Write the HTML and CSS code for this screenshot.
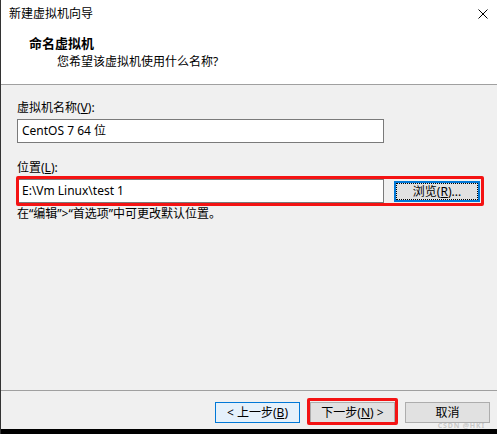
FILE: index.html
```html
<!DOCTYPE html>
<html lang="zh-CN">
<head>
  <meta charset="UTF-8">
  <title>新建虚拟机向导</title>
  <link rel="stylesheet" href="styles.css">
</head>
<body>

  <div class="window">
    <!-- Title bar -->
    <div class="titlebar">
      <span class="title">新建虚拟机向导</span>
      <svg class="close" width="10" height="10" viewBox="0 0 10 10">
        <path d="M 0.5 0.5 L 9.5 9.5 M 9.5 0.5 L 0.5 9.5" />
      </svg>
    </div>

    <!-- Wizard header -->
    <div class="header">
      <div class="header-title">命名虚拟机</div>
      <div class="header-sub">您希望该虚拟机使用什么名称?</div>
    </div>

    <!-- Form -->
    <div class="content">
      <div class="label">虚拟机名称(<u>V</u>):</div>
      <div class="field">CentOS 7 64 位</div>

      <div class="label label-second">位置(<u>L</u>):</div>
      <div class="row">
        <div class="field">E:\Vm Linux\test 1</div>
        <div class="btn btn-focus">浏览(<u>R</u>)...</div>
        <div class="mark mark-row"></div>
      </div>
      <div class="hint">在“编辑”&gt;“首选项”中可更改默认位置。</div>
    </div>

    <!-- Buttons -->
    <div class="footer">
      <div class="btn btn-default">&lt; 上一步(<u>B</u>)</div>
      <div class="btn btn-next">
        下一步(<u>N</u>) &gt;
        <div class="mark mark-btn"></div>
      </div>
      <div class="btn">取消</div>
    </div>
    <div class="taskbar"></div>

    <div class="watermark">CSDN @HKI</div>
  </div>

</body>
</html>
```

FILE: styles.css
```css
body {
  margin: 0;
  font-family: "Noto Sans", "Noto Sans CJK SC", sans-serif;
  font-size: 12px;
  color: #000;
}

.window {
  position: relative;
  width: 496px;
  height: 434px;
  border-left: 1px solid #333;
  background: #f0f0f0;
  display: flex;
  flex-direction: column;
  overflow: hidden;
}

.titlebar {
  height: 28px;
  background: #fff;
  display: flex;
  align-items: center;
  justify-content: space-between;
  padding: 0 9px 0 8px;
}

.title {
  line-height: 16px;
}

.close path {
  stroke: #000;
  stroke-width: 1;
  fill: none;
}

.header {
  height: 57px;
  box-sizing: border-box;
  background: #fff;
  border-bottom: 1px solid #a0a0a0;
  padding: 6px 0 0 28px;
}

.header-title {
  font-size: 13px;
  font-weight: bold;
  line-height: 18px;
}

.header-sub {
  margin-top: 2px;
  padding-left: 28px;
  line-height: 16px;
}

.content {
  flex: 1;
  padding: 15px 0 0 16px;
}

.label {
  line-height: 16px;
  margin-bottom: 3px;
}

.label-second {
  margin-top: 17px;
}

.field {
  width: 367px;
  height: 24px;
  box-sizing: border-box;
  border: 1px solid #7a7a7a;
  background: #fff;
  padding: 0 4px;
  line-height: 22px;
}

.row {
  position: relative;
  display: flex;
  align-items: center;
  gap: 10px;
  width: 463px;
}

.hint {
  margin-top: 3px;
  line-height: 16px;
}

.btn {
  position: relative;
  width: 85px;
  height: 21px;
  box-sizing: border-box;
  border: 1px solid #adadad;
  background: #e1e1e1;
  text-align: center;
  line-height: 19px;
}

.btn-focus {
  width: 86px;
  border: 2px solid #0078d7;
  line-height: 17px;
  outline: 1px dotted #000;
  outline-offset: -3px;
}

.btn-default {
  border-color: #0078d7;
  background: #e5f1fb;
}

.mark {
  position: absolute;
  border: 3px solid #f41313;
  border-radius: 2px;
  pointer-events: none;
}

.mark-row {
  top: -3px;
  bottom: -3px;
  left: -1px;
  right: -4px;
}

.mark-btn {
  top: -5px;
  bottom: -3px;
  left: -4px;
  right: -4px;
}

.footer {
  height: 39px;
  box-sizing: border-box;
  border-top: 1px solid #a0a0a0;
  display: flex;
  justify-content: flex-end;
  gap: 10px;
  padding: 11px 7px 0 0;
}

.taskbar {
  height: 5px;
  background: #000;
}

.watermark {
  position: absolute;
  right: 12px;
  bottom: 5px;
  font-size: 7px;
  line-height: 7px;
  font-weight: bold;
  letter-spacing: 0.8px;
  color: rgba(160, 160, 160, 0.5);
}
```
